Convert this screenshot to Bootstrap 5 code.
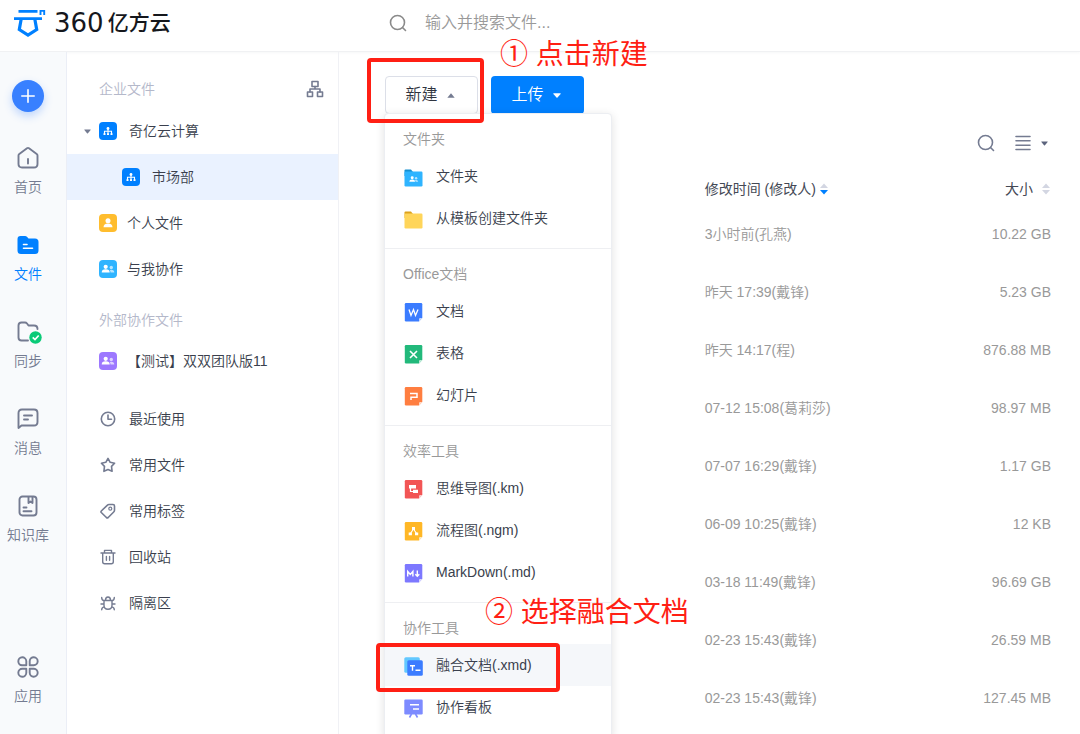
<!DOCTYPE html>
<html lang="zh-CN">
<head>
<meta charset="utf-8">
<meta name="viewport" content="width=device-width, initial-scale=1">
<title>360亿方云</title>
<link rel="stylesheet" href="https://cdn.jsdelivr.net/npm/bootstrap@5.3.0/dist/css/bootstrap.min.css">
<style>
  :root { --blue: #0080ff; --ink: #3a3f4d; --slate: #747b91; --red: #ff1f14; }
  body { font-family: "Liberation Sans", "Noto Sans CJK SC", sans-serif; font-size: 14px; line-height: 20px; font-weight: 350; color: var(--ink); background: #fff; }
  a { color: inherit; text-decoration: none; }
  svg { display: block; flex: none; }
  .line-icon { fill: none; stroke: currentColor; stroke-width: 1.6; stroke-linecap: round; stroke-linejoin: round; }
  .topbar { height: 52px; border-bottom: 1px solid #f0f1f3; box-shadow: 0 1px 3px rgba(30, 40, 70, .04); padding-bottom: 6px; }
  .brand { width: 385px; padding-left: 14px; color: #15171c; }
  .brand-digits { font-family: "DejaVu Sans", sans-serif; font-size: 26px; line-height: 28px; font-weight: 400; }
  .brand-name { font-size: 21px; line-height: 28px; font-weight: 500; }
  .search-input { font-size: 16px; line-height: 24px; color: #555; font-weight: 350; margin-left: 18px; }
  .search-input::placeholder { color: #999; opacity: 1; }
  .rail { width: 67px; background: #f8fafc; border-right: 1px solid #ebeef6; padding-top: 28px; color: var(--slate); }
  .rail .line-icon { stroke-width: 1.9; }
  .add-btn { width: 32px; height: 32px; border: 0; border-radius: 50%; background: #3880ff; box-shadow: 0 4px 8px rgba(56, 128, 255, .3); margin-right: 10px; }
  .rail-list { padding-top: 18px; width: 56px; }
  .rail-list a { height: 87px; gap: 7px; }
  .rail-list a.active { color: var(--blue); }
  .rail-list .apps { margin-top: 74px; }
  .tree { width: 272px; border-right: 1px solid #f0f1f5; }
  .tree-title { color: #b4b8ca; padding: 9px 14px 0 32px; height: 46px; }
  .tree-title.first { height: 56px; padding-top: 18px; }
  .tree-row { height: 46px; padding-left: 32px; gap: 12px; }
  .tree-row.close-gap { gap: 10px; }
  .tree-row.root { padding-left: 17px; }
  .tree-row.child { padding-left: 55px; background: #eaf2ff; }
  .tree-row .small-slot { width: 18px; color: var(--slate); }
  .workspace { padding: 24px 29px 0 46px; }
  .tool-btn { width: 93px; height: 38px; font-size: 16px; border-radius: 4px; font-weight: 350; padding: 0 3px 0 0; gap: 9px; }
  .new-btn { border: 1px solid #dcdfe8; background: #fff; color: #2f3440; }
  .upload-btn { background: var(--blue); color: #fff; border: 0; margin-left: 13px; }
  .create-menu { width: 228px; top: 100%; left: -1px; padding: 0; margin: -1px 0 0; border: 1px solid #eceef2; border-radius: 4px; box-shadow: 0 2px 10px rgba(0, 0, 0, .12); font-size: 14px; color: var(--ink); }
  .menu-part { border-bottom: 1px solid #eeeff2; padding-bottom: 9px; }
  .menu-title { height: 41px; padding: 15px 0 0 18px; color: #999; }
  .menu-row { height: 42px; padding-left: 19px; gap: 13px; line-height: 20px; }
  .menu-row svg { margin-top: 3px; }
  .menu-row.active { background: #f5f7fa; }
  .frame { position: absolute; border: 4px solid var(--red); border-radius: 4px; pointer-events: none; z-index: 1100; }
  .frame-new { inset: -18px -6px -9px -18px; }
  .frame-doc { top: -1px; left: -9px; width: 184px; height: 49px; }
  .note { position: absolute; color: var(--red); font-size: 28px; line-height: 36px; white-space: nowrap; z-index: 1100; pointer-events: none; font-weight: 400; }
  .note-new { left: 115px; top: -39px; }
  .note-doc { left: 100px; top: -49px; }
  .view-tools { height: 58px; color: var(--slate); padding-right: 3px; }
  .view-switch { gap: 10px; }
  .files { table-layout: fixed; width: 100%; }
  .files th { height: 33px; padding: 0; font-weight: 350; color: #444955; vertical-align: middle; }
  .files td { height: 58px; padding: 0; color: #999; vertical-align: middle; }
  .files .name-col { width: 48%; }
  .plain { border: 0; background: none; padding: 0; color: inherit; }
</style>
</head>
<body class="vh-100 overflow-hidden d-flex flex-column">

<svg width="0" height="0" class="position-absolute" aria-hidden="true">
  <symbol id="lens" viewBox="0 0 18 18"><circle cx="8.500" cy="8.500" r="7"/><path d="M13.500 13.500 16.500 16.500"/></symbol>
  <symbol id="down" viewBox="0 0 8 5"><path d="M.7.300h6.600q.7 0 .3.600L4.500 4.600q-.5.500-1 0L.4.900Q0 .3.700.300z"/></symbol>
  <symbol id="org" viewBox="0 0 18 18"><rect width="18" height="18" rx="4" fill="#0080ff"/><path d="M9 7v5M5.500 12V9.200h7V12" fill="none" stroke="#fff" stroke-width="1.100"/><circle cx="9" cy="6.500" r="1.400" fill="#fff"/><path d="M4.500 11.200h2v1.800h-2zM8 11.200h2v1.800H8zM11.500 11.200h2v1.800h-2z" fill="#fff"/></symbol>
  <symbol id="pair" viewBox="0 0 18 18"><circle cx="6.700" cy="6.800" r="2.100" fill="#fff"/><path d="M2.700 12.500q0-3.200 4-3.200t4 3.200z" fill="#fff"/><g fill="#fff" opacity=".65"><circle cx="12.300" cy="7.500" r="1.700"/><path d="M11.500 12.500q0-1.600-.8-2.500 4.500-.8 4.600 2.500z"/></g></symbol>
  <symbol id="sheet" viewBox="0 0 18 19"><path d="M1.500 0h15q1.300 0 1.300 1.300V15L14.500 18.500h-13Q.3 18.500.3 17.200V1.300Q.3 0 1.500 0z"/><path d="M17.800 15 14.500 18.500V16.200q0-1.200 1.200-1.200z" fill="#fff" opacity=".7"/></symbol>
</svg>

<header class="topbar d-flex align-items-center flex-shrink-0">
  <a href="#" class="brand d-flex align-items-center" aria-label="360亿方云">
    <svg width="32" height="30" viewBox="0 0 32 30" fill="none" stroke="#0080ff" stroke-width="2.800"><path d="M4.500 3.400h19M0 10.700h28"/><path d="M7.200 11 5.300 21.500 14 27 22.700 21.500 20.800 11" stroke-width="3.200"/><path d="M26.500 7V2.900h3.700V7" stroke-width="1.900"/></svg>
    <span class="brand-digits ms-2">360</span><span class="brand-name ms-1">亿方云</span>
  </a>
  <form class="d-flex align-items-center flex-grow-1" role="search">
    <label for="q" class="ps-1" aria-label="搜索"><svg class="line-icon" style="color:#8a8a8a" width="18" height="18"><use href="#lens"/></svg></label>
    <input id="q" type="text" class="search-input border-0 flex-grow-1 p-0" placeholder="输入并搜索文件...">
  </form>
</header>

<div class="d-flex flex-grow-1">
  <nav class="rail d-flex flex-column align-items-center flex-shrink-0" aria-label="主导航">
    <button class="add-btn d-flex align-items-center justify-content-center p-0" aria-label="新建"><svg width="14" height="14" viewBox="0 0 14 14" stroke="#fff" stroke-width="1.600" stroke-linecap="round"><path d="M7 .8v12.400M.8 7h12.400"/></svg></button>
    <div class="rail-list d-flex flex-column mt-3 me-auto">
      <a href="#" class="d-flex flex-column align-items-center"><svg class="line-icon" width="24" height="24" viewBox="0 0 24 24"><path d="M2.500 9.500Q2.500 8.500 3.300 7.900L11 2.200q1-.7 2 0l7.700 5.700q.8.600.8 1.600V18q0 3.500-3.500 3.500H6Q2.500 21.500 2.500 18zM12 13v4.500"/></svg>首页</a>
      <a href="#" class="active d-flex flex-column align-items-center"><svg width="24" height="24" viewBox="0 0 24 24"><path d="M1.500 6q0-3 3-3H9q1.300 0 2.200 1l1.300 1.500H19q3.500 0 3.500 3.500v8.500q0 3.500-3.500 3.500H5q-3.500 0-3.500-3.500z" fill="#0080ff"/><path d="M7.500 11.500h3.500M7.500 15.300h9" stroke="#fff" stroke-width="1.600" stroke-linecap="round"/></svg>文件</a>
      <a href="#" class="d-flex flex-column align-items-center"><svg width="28" height="24" viewBox="0 0 28 24"><path class="line-icon" d="M14 20.500H7.500q-3 0-3-3V5.500q0-3 3-3H11q1.200 0 2 1l1.500 2H20q3.500 0 3.500 3.500"/><circle cx="21.500" cy="17.500" r="6.200" fill="#0acb78"/><path d="m18.700 17.300 2.300 2.200 3.700-4" fill="none" stroke="#fff" stroke-width="1.700"/></svg>同步</a>
      <a href="#" class="d-flex flex-column align-items-center"><svg class="line-icon" width="24" height="24" viewBox="0 0 24 24"><path d="M2.500 21V6q0-3.500 3.500-3.500h12q3.500 0 3.500 3.500v9q0 3.500-3.500 3.500H5.500zM8 8.500h8M8 12.500h4"/></svg>消息</a>
      <a href="#" class="d-flex flex-column align-items-center"><svg class="line-icon" width="24" height="24" viewBox="0 0 24 24"><rect x="3.500" y="2.500" width="17" height="19" rx="3"/><path d="M12.500 3v6l2-1.500 2 1.500V3M7.500 13.500h3M7.500 17.300h8"/></svg>知识库</a>
      <a href="#" class="apps d-flex flex-column align-items-center"><svg class="line-icon" width="24" height="24" viewBox="0 0 24 24"><path d="M10.300 10.300H6A4 4 0 1 1 10.300 6zM13.700 10.300V6a4 4 0 1 1 4 4.300zM10.300 13.700V18a4 4 0 1 1-4-4.300zM13.700 13.700H18a4 4 0 1 1-4.300 4z"/></svg>应用</a>
    </div>
  </nav>

  <nav class="tree flex-shrink-0" aria-label="文件目录">
    <div class="tree-title first d-flex align-items-center justify-content-between"><span>企业文件</span>
      <button class="plain" aria-label="组织架构" style="color:#747b91"><svg class="line-icon" width="18" height="18" viewBox="0 0 18 18"><rect x="6" y="1.500" width="6" height="5"/><rect x="1.500" y="12" width="5" height="4.500"/><rect x="11.500" y="12" width="5" height="4.500"/><path d="M9 6.500v2.500M4 12V9h10v3"/></svg></button></div>
    <a href="#" class="tree-row root d-flex align-items-center"><span class="d-flex align-items-center gap-2"><svg width="7" height="5" fill="#747b91"><use href="#down"/></svg><svg width="18" height="18"><use href="#org"/></svg></span>奇亿云计算</a>
    <a href="#" class="tree-row child d-flex align-items-center"><svg width="18" height="18"><use href="#org"/></svg>市场部</a>
    <a href="#" class="tree-row close-gap d-flex align-items-center"><svg width="18" height="18" viewBox="0 0 18 18"><rect width="18" height="18" rx="4" fill="#ffbd2e"/><circle cx="9" cy="6.700" r="2.500" fill="#fff"/><path d="M4.500 13.300q0-3.800 4.500-3.800t4.500 3.800z" fill="#fff"/></svg>个人文件</a>
    <a href="#" class="tree-row close-gap d-flex align-items-center"><svg width="18" height="18"><rect width="18" height="18" rx="4" fill="#2fb4ff"/><use href="#pair"/></svg>与我协作</a>
    <div class="tree-title d-flex align-items-center">外部协作文件</div>
    <a href="#" class="tree-row close-gap d-flex align-items-center mb-2"><svg width="18" height="18"><rect width="18" height="18" rx="4" fill="#9d78ff"/><use href="#pair"/></svg>【测试】双双团队版11</a>
    <div class="pt-1">
      <a href="#" class="tree-row d-flex align-items-center"><span class="small-slot d-flex justify-content-center"><svg class="line-icon" width="16" height="16" viewBox="0 0 16 16"><circle cx="8" cy="8" r="6.700"/><path d="M8 4v4.300h3.500"/></svg></span>最近使用</a>
      <a href="#" class="tree-row d-flex align-items-center"><span class="small-slot d-flex justify-content-center"><svg class="line-icon" width="16" height="16" viewBox="0 0 16 16"><path d="m8 1.400 2.200 3.900 4.400.9-3.100 3.200.6 4.900L8 12.500l-4.100 1.800.6-4.900L1.400 6.200l4.400-.9z"/></svg></span>常用文件</a>
      <a href="#" class="tree-row d-flex align-items-center"><span class="small-slot d-flex justify-content-center"><svg class="line-icon" width="16" height="16" viewBox="0 0 16 16"><path d="M1.300 8 7.200 2.300Q8 1.500 9 1.500h4q1.500 0 1.500 1.500v4.300q0 1-.8 1.700L8.200 14.500q-.9.700-1.800 0L1.300 9.500Q.6 8.700 1.300 8z"/><circle cx="10.300" cy="5.700" r="1.500" stroke-width="1.200"/></svg></span>常用标签</a>
      <a href="#" class="tree-row d-flex align-items-center"><span class="small-slot d-flex justify-content-center"><svg class="line-icon" width="16" height="16" viewBox="0 0 16 16"><path d="M1 4h14M2.700 4v8.700q0 2 2 2h6.600q2 0 2-2V4M4.500 4V1.400h7V4M6.400 7.500v3.800M9.600 7.500v3.800" stroke-width="1.400"/></svg></span>回收站</a>
      <a href="#" class="tree-row d-flex align-items-center"><span class="small-slot d-flex justify-content-center"><svg class="line-icon" width="16" height="16" viewBox="0 0 16 16"><path d="M4 5.500h8v4.800q0 4-4 4t-4-4zM5.500 5.500q0-3.500 2.500-3.500t2.500 3.500M1 9h3M12 9h3M1.700 2.500Q1.700 5.500 4 5.700M14.300 2.500q0 3-2.300 3.200M1.700 14.800q0-2.300 2.500-2.900M14.300 14.800q0-2.300-2.500-2.900" stroke-width="1.400"/></svg></span>隔离区</a>
    </div>
  </nav>

  <main class="workspace flex-grow-1">
    <div class="d-flex">
      <div class="position-relative">
        <button class="tool-btn new-btn d-flex align-items-center justify-content-center" aria-expanded="true">新建<svg width="8" height="5" viewBox="0 0 8 5" fill="#747b91"><path d="M4 .3 7.700 4.700H.3z"/></svg></button>
        <div class="dropdown-menu create-menu show">
          <div class="menu-part">
            <div class="menu-title">文件夹</div>
            <a href="#" class="menu-row d-flex align-items-center"><svg width="19" height="18" viewBox="0 0 19 18"><path d="M.5 1.500Q.5.500 1.500.500H7L9 3v4H.5z" fill="#1690d0"/><rect x=".5" y="2.500" width="18" height="15" rx="1.200" fill="#2fb4ff"/><g transform="translate(3.500 4) scale(.7)"><use href="#pair" width="18" height="18"/></g></svg>文件夹</a>
            <a href="#" class="menu-row d-flex align-items-center"><svg width="19" height="18" viewBox="0 0 19 18"><path d="M.5 1.500Q.5.500 1.500.500H7L9 3v4H.5z" fill="#dda21c"/><rect x=".5" y="2.500" width="18" height="15" rx="1.200" fill="#ffd55a"/></svg>从模板创建文件夹</a>
          </div>
          <div class="menu-part">
            <div class="menu-title">Office文档</div>
            <a href="#" class="menu-row d-flex align-items-center"><svg width="19" height="19" fill="#3b7cff"><use href="#sheet" width="19" height="19"/><path d="m5 6.500 2 6 2.500-6 2 6 2.500-6" fill="none" stroke="#fff" stroke-width="1.300"/></svg>文档</a>
            <a href="#" class="menu-row d-flex align-items-center"><svg width="19" height="19" fill="#22b97b"><use href="#sheet" width="19" height="19"/><path d="m6 6 7 7M13 6l-7 7" stroke="#fff" stroke-width="1.600"/></svg>表格</a>
            <a href="#" class="menu-row d-flex align-items-center"><svg width="19" height="19" fill="#ff7e40"><use href="#sheet" width="19" height="19"/><path d="M6 6.500h7v3.700H7V13" fill="none" stroke="#fff" stroke-width="1.500"/></svg>幻灯片</a>
          </div>
          <div class="menu-part">
            <div class="menu-title">效率工具</div>
            <a href="#" class="menu-row d-flex align-items-center"><svg width="19" height="19" fill="#f25555"><use href="#sheet" width="19" height="19"/><path d="M5 5h7v3.500H5zM9 9.700h5V13H9z" fill="#fff"/><path d="M6.500 8v3.500H9" fill="none" stroke="#fff" stroke-width="1.200"/></svg>思维导图(.km)</a>
            <a href="#" class="menu-row d-flex align-items-center"><svg width="19" height="19" fill="#ffb726"><use href="#sheet" width="19" height="19"/><path d="m9.500 7-3.200 4.800M9.500 7l3.200 4.800" stroke="#fff" stroke-width="1.100"/><path d="M8 5h3v3H8zM4.700 10.500h3.200v2.700H4.700zM11 10.500h3.200v2.700H11z" fill="#fff"/></svg>流程图(.ngm)</a>
            <a href="#" class="menu-row d-flex align-items-center"><svg width="19" height="19" fill="#7d78ff"><use href="#sheet" width="19" height="19"/><path d="M3.700 12.500v-5l2.600 3 2.600-3v5M13.300 6.500V12M11.300 10.200l2 2 2-2" fill="none" stroke="#fff" stroke-width="1.400"/></svg>MarkDown(.md)</a>
          </div>
          <div class="menu-part">
            <div class="menu-title">协作工具</div>
            <div class="position-relative">
              <a href="#" class="menu-row active d-flex align-items-center"><svg width="19" height="19" viewBox="0 0 19 19"><rect x=".3" y=".3" width="15.500" height="15.500" rx="1.500" fill="#62c8ff"/><rect x="3.300" y="3.300" width="15.500" height="15.500" rx="1.500" fill="#3b7cff"/><path d="M6 8.700h5M8.500 8.700v5M11.500 13.300h5" stroke="#fff" stroke-width="1.400"/></svg>融合文档(.xmd)</a>
              <span class="frame frame-doc"></span>
              <span class="note note-doc">② 选择融合文档</span>
            </div>
            <a href="#" class="menu-row d-flex align-items-center"><svg width="19" height="19" viewBox="0 0 19 19"><rect x=".3" y=".5" width="18.400" height="15" rx="1.200" fill="#7d8bff"/><path d="m7.500 15-2 3.500M11.500 15l2 3.500" stroke="#7d8bff" stroke-width="1.600"/><path d="M6 5.800h9M9 10h6" stroke="#fff" stroke-width="1.500"/></svg>协作看板</a>
          </div>
        </div>
        <span class="frame frame-new"></span>
        <span class="note note-new">① 点击新建</span>
      </div>
      <button class="tool-btn upload-btn d-flex align-items-center justify-content-center">上传<svg width="8" height="5" fill="#fff"><use href="#down"/></svg></button>
    </div>

    <div class="view-tools d-flex align-items-center justify-content-end">
      <button class="plain" aria-label="搜索"><svg class="line-icon" width="18" height="18"><use href="#lens"/></svg></button>
      <button class="plain view-switch d-flex align-items-center ms-3 ps-1" aria-label="视图"><svg class="line-icon" width="16" height="16" viewBox="0 0 16 16"><path d="M1 1.500h14M1 5.800h14M1 10.200h14M1 14.500h14"/></svg><svg width="7" height="5" fill="#5c647d"><use href="#down"/></svg></button>
    </div>

    <table class="files">
      <thead>
        <tr><th class="name-col" aria-label="名称"></th>
          <th><button class="plain d-flex align-items-center">修改时间 (修改人)<svg class="ms-1" width="8" height="12" viewBox="0 0 8 12"><path d="M4 .5 8 5H0z" fill="#d3d6e2"/><path d="M4 11.500 8 7H0z" fill="#0080ff"/></svg></button></th>
          <th><button class="plain d-flex align-items-center ms-auto">大小<svg class="ms-2" width="10" height="12" viewBox="0 0 8 12"><path d="M4 .5 8 5H0zM4 11.500 8 7H0z" fill="#d3d6e2"/></svg></button></th></tr>
      </thead>
      <tbody>
        <tr><td></td><td>3小时前(孔燕)</td><td class="text-end">10.22 GB</td></tr>
        <tr><td></td><td>昨天 17:39(戴锋)</td><td class="text-end">5.23 GB</td></tr>
        <tr><td></td><td>昨天 14:17(程)</td><td class="text-end">876.88 MB</td></tr>
        <tr><td></td><td>07-12 15:08(葛莉莎)</td><td class="text-end">98.97 MB</td></tr>
        <tr><td></td><td>07-07 16:29(戴锋)</td><td class="text-end">1.17 GB</td></tr>
        <tr><td></td><td>06-09 10:25(戴锋)</td><td class="text-end">12 KB</td></tr>
        <tr><td></td><td>03-18 11:49(戴锋)</td><td class="text-end">96.69 GB</td></tr>
        <tr><td></td><td>02-23 15:43(戴锋)</td><td class="text-end">26.59 MB</td></tr>
        <tr><td></td><td>02-23 15:43(戴锋)</td><td class="text-end">127.45 MB</td></tr>
      </tbody>
    </table>
  </main>
</div>
<script src="https://cdn.jsdelivr.net/npm/bootstrap@5.3.0/dist/js/bootstrap.bundle.min.js"></script>
</body>
</html>
